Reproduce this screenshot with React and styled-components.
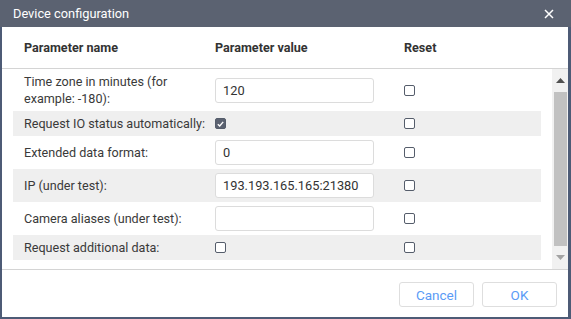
import React from "react";
import styled, { createGlobalStyle } from "styled-components";

const Global = createGlobalStyle`
  html, body {
    margin: 0;
    padding: 0;
    background: #fff;
  }
  body {
    font-family: Roboto, "Liberation Sans", Arial, sans-serif;
  }
`;

const Window = styled.div`
  width: 571px;
  height: 319px;
  display: flex;
  flex-direction: column;
  box-sizing: border-box;
`;

const TitleBar = styled.div`
  height: 27px;
  flex: none;
  background: #5b6271;
  color: #fff;
  display: flex;
  align-items: center;
  justify-content: space-between;
  padding: 0 17px 0 13px;
  font-size: 12.8px;
`;

const CloseButton = styled.button`
  border: 0;
  background: none;
  padding: 0;
  display: flex;
  cursor: pointer;
`;

const Body = styled.div`
  flex: 1;
  display: flex;
  flex-direction: column;
  background: #fff;
  border: solid #4d5b76;
  border-width: 0 3px 2px 2px;
  min-height: 0;
`;

const Grid = styled.div`
  display: grid;
  grid-template-columns: 191px 189px 1fr;
  align-items: center;
`;

const HeaderRow = styled(Grid)`
  height: 41px;
  flex: none;
  padding-left: 22px;
  border-bottom: 1px solid #d4d4d4;
  font-weight: 700;
  font-size: 12.6px;
  color: #333;
`;

const ScrollArea = styled.div`
  height: 200px;
  flex: none;
  display: flex;
  justify-content: space-between;
`;

const Rows = styled.div`
  width: 528px;
  margin-left: 11px;
`;

const Row = styled(Grid)`
  padding: 4px 0 4px 11px;
  min-height: 17px;
  background: ${(p) => (p.$shaded ? "#efefef" : "transparent")};
  font-size: 12.6px;
  color: #3a3a3a;
`;

const Label = styled.div`
  line-height: 17px;
  padding-right: 4px;
`;

const Input = styled.input`
  box-sizing: border-box;
  width: 159px;
  height: 25px;
  border: 1px solid #dcdcdc;
  border-radius: 3px;
  padding: 0 7px;
  font: 12.8px Roboto, "Liberation Sans", Arial, sans-serif;
  color: #333;
  outline: 0;
`;

const Box = styled.span`
  box-sizing: border-box;
  width: 11px;
  height: 11px;
  border: 1px solid #555d6b;
  border-radius: 2px;
  background: ${(p) => (p.$checked ? "#5b6271" : "#fff")};
  display: flex;
  align-items: center;
  justify-content: center;
`;

const Scrollbar = styled.div`
  width: 16px;
  background: #f1f1f1;
  display: flex;
  flex-direction: column;
  align-items: center;
`;

const Arrow = styled.div`
  height: 24px;
  width: 100%;
  display: flex;
  align-items: center;
  justify-content: center;
`;

const Thumb = styled.div`
  width: 13px;
  height: 160px;
  margin-left: 1px;
  background: #c1c1c1;
`;

const Footer = styled.div`
  flex: 1;
  border-top: 1px solid #d4d4d4;
  display: flex;
  justify-content: flex-end;
  align-items: flex-start;
  gap: 8px;
  padding: 12px 11px 0 0;
`;

const Button = styled.button`
  width: 75px;
  height: 25px;
  border: 1px solid #dedede;
  border-radius: 3px;
  background: #fff;
  color: #5a9bf6;
  font: 13.5px Roboto, "Liberation Sans", Arial, sans-serif;
  cursor: pointer;
  padding: 0;
`;

const Check = ({ checked }) => (
  <Box $checked={checked}>
    {checked && (
      <svg width="7" height="6" viewBox="0 0 7 6">
        <path d="M0.8 3.2 L2.7 5 L6.2 0.9" fill="none" stroke="#fff" strokeWidth="1.4" />
      </svg>
    )}
  </Box>
);

const params = [
  { name: "Time zone in minutes (for example: -180):", input: "120" },
  { name: "Request IO status automatically:", check: true },
  { name: "Extended data format:", input: "0" },
  { name: "IP (under test):", input: "193.193.165.165:21380" },
  { name: "Camera aliases (under test):", input: "" },
  { name: "Request additional data:", check: false },
];

export default function App() {
  return (
    <>
      <Global />
      <Window>
        <TitleBar>
          <span>Device configuration</span>
          <CloseButton>
            <svg width="10" height="10" viewBox="0 0 10 10">
              <path d="M1 1 L9 9 M9 1 L1 9" stroke="#fff" strokeWidth="1.5" />
            </svg>
          </CloseButton>
        </TitleBar>
        <Body>
          <HeaderRow>
            <div>Parameter name</div>
            <div>Parameter value</div>
            <div>Reset</div>
          </HeaderRow>
          <ScrollArea>
            <Rows>
              {params.map((p, i) => (
                <Row key={p.name} $shaded={i % 2 === 1}>
                  <Label>{p.name}</Label>
                  <div>
                    {p.input !== undefined ? (
                      <Input defaultValue={p.input} />
                    ) : (
                      <Check checked={p.check} />
                    )}
                  </div>
                  <Check />
                </Row>
              ))}
            </Rows>
            <Scrollbar>
              <Arrow>
                <svg width="9" height="5" viewBox="0 0 9 5">
                  <path d="M0 5 L4.5 0 L9 5 Z" fill="#505050" />
                </svg>
              </Arrow>
              <Thumb />
              <Arrow>
                <svg width="9" height="5" viewBox="0 0 9 5">
                  <path d="M0 0 L4.5 5 L9 0 Z" fill="#a3a3a3" />
                </svg>
              </Arrow>
            </Scrollbar>
          </ScrollArea>
          <Footer>
            <Button>Cancel</Button>
            <Button>OK</Button>
          </Footer>
        </Body>
      </Window>
    </>
  );
}
